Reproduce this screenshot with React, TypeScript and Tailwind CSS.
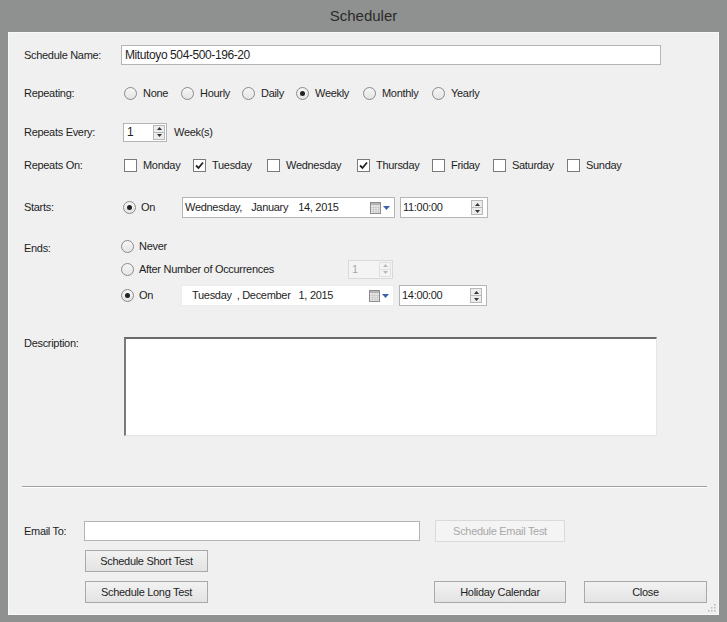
import type { ReactNode } from "react";

const DAYS = [
  { name: "Monday", checked: false, w: "w-[69px]" },
  { name: "Tuesday", checked: true, w: "w-[74px]" },
  { name: "Wednesday", checked: false, w: "w-[90px]" },
  { name: "Thursday", checked: true, w: "w-[75px]" },
  { name: "Friday", checked: false, w: "w-[61px]" },
  { name: "Saturday", checked: false, w: "w-[74px]" },
  { name: "Sunday", checked: false, w: "" },
];

const REPEATS = [
  { name: "None", checked: false, w: "w-[57px]" },
  { name: "Hourly", checked: false, w: "w-[61px]" },
  { name: "Daily", checked: false, w: "w-[54px]" },
  { name: "Weekly", checked: true, w: "w-[67px]" },
  { name: "Monthly", checked: false, w: "w-[69px]" },
  { name: "Yearly", checked: false, w: "" },
];

function Radio({ checked }: { checked?: boolean }) {
  return (
    <span className="w-[13px] h-[13px] shrink-0 rounded-full border border-[#8a8a8a] bg-linear-to-b from-[#f6f6f6] to-[#e4e4e4] flex items-center justify-center">
      {checked && <span className="w-[5px] h-[5px] rounded-full bg-[#222]" />}
    </span>
  );
}

function Check({ checked }: { checked?: boolean }) {
  return (
    <span className="w-[13px] h-[13px] shrink-0 border border-[#7a7a7a] bg-white flex items-center justify-center">
      {checked && (
        <svg width="9" height="9" viewBox="0 0 9 9">
          <path d="M1 4.5 L3.5 7 L8 1.5" fill="none" stroke="#222" strokeWidth="1.8" />
        </svg>
      )}
    </span>
  );
}

function SpinButtons({ disabled }: { disabled?: boolean }) {
  const c = disabled ? "#b8b8b8" : "#333";
  return (
    <span
      className={`w-[12px] h-[15px] flex flex-col border ${
        disabled ? "border-[#e0e0e0] bg-[#f4f4f4]" : "border-[#b9b9b9] bg-[#ececec]"
      }`}
    >
      <span className="flex-1 flex items-center justify-center">
        <svg width="5" height="3" viewBox="0 0 5 3">
          <path d="M0 3 L2.5 0 L5 3 Z" fill={c} />
        </svg>
      </span>
      <span className={`h-px ${disabled ? "bg-[#e0e0e0]" : "bg-[#b9b9b9]"}`} />
      <span className="flex-1 flex items-center justify-center">
        <svg width="5" height="3" viewBox="0 0 5 3">
          <path d="M0 0 L2.5 3 L5 0 Z" fill={c} />
        </svg>
      </span>
    </span>
  );
}

function CalendarIcon() {
  return (
    <span className="flex items-center gap-[2px]">
      <svg width="11" height="12" viewBox="0 0 11 12">
        <rect x="0.5" y="0.5" width="10" height="11" fill="#e8e8e8" stroke="#8c8c8c" />
        <rect x="1" y="1" width="9" height="2" fill="#b4b4b4" />
        <path d="M1 5.5 H10 M1 7.5 H10 M1 9.5 H10 M3.5 3 V11 M6 3 V11 M8.5 3 V11" stroke="#c9c9c9" strokeWidth="0.7" />
      </svg>
      <svg width="7" height="4" viewBox="0 0 7 4">
        <path d="M0 0 L7 0 L3.5 4 Z" fill="#3d63b0" />
      </svg>
    </span>
  );
}

function DateBox({ children, faint }: { children: ReactNode; faint?: boolean }) {
  return (
    <div
      className={`w-[213px] h-[21px] bg-white border ${
        faint ? "border-[#ececec]" : "border-[#b5b5b5]"
      } flex items-center pr-[4px]`}
    >
      <div className="flex-1 flex items-center">{children}</div>
      <CalendarIcon />
    </div>
  );
}

function TimeBox({ value }: { value: string }) {
  return (
    <div className="ml-[5px] w-[88px] h-[21px] bg-white border border-[#b5b5b5] flex items-center pl-[2px] pr-[4px]">
      <span className="flex-1">{value}</span>
      <SpinButtons />
    </div>
  );
}

function Button({ children, disabled, w }: { children: ReactNode; disabled?: boolean; w: string }) {
  return (
    <button
      className={`${w} h-[22px] flex items-center justify-center border ${
        disabled
          ? "border-[#dadada] bg-[#f4f4f4] text-[#a8a8a8]"
          : "border-[#a9a9a9] bg-linear-to-b from-[#f2f2f2] to-[#e3e3e3] text-[#1e1e1e]"
      }`}
    >
      {children}
    </button>
  );
}

function Label({ children }: { children: ReactNode }) {
  return <div className="w-[97px] shrink-0">{children}</div>;
}

export default function App() {
  return (
    <div className="w-[727px] h-[622px] bg-[#8f9090] flex flex-col font-['Liberation_Sans',Arial,sans-serif] text-[11px] tracking-[-0.3px] text-[#1e1e1e]">
      <div className="h-[32px] flex items-center justify-center text-[15px] tracking-normal text-[#2b2b2b]">
        Scheduler
      </div>
      <div className="ml-[8px] w-[711px] h-[583px] bg-[#f0f0f0] border border-[#f8f8f8] relative pl-[15px]">
        {/* name */}
        <div className="mt-[12px] h-[20px] flex items-center">
          <Label>Schedule Name:</Label>
          <div className="w-[540px] h-[20px] bg-white border border-[#b5b5b5] flex items-center px-[3px] text-[12px] tracking-[-0.4px]">
            Mitutoyo 504-500-196-20
          </div>
        </div>

        {/* repeating */}
        <div className="mt-[18px] h-[20px] flex items-center">
          <Label>Repeating:</Label>
          <div className="flex items-center ml-[3px]">
            {REPEATS.map((r) => (
              <div key={r.name} className={`${r.w} flex items-center gap-[6px]`}>
                <Radio checked={r.checked} />
                <span>{r.name}</span>
              </div>
            ))}
          </div>
        </div>

        {/* repeats every */}
        <div className="mt-[19px] h-[20px] flex items-center">
          <Label>Repeats Every:</Label>
          <div className="ml-[2px] w-[44px] h-[19px] bg-white border border-[#b5b5b5] flex items-center pl-[3px] pr-[1px]">
            <span className="flex-1 text-[12px]">1</span>
            <SpinButtons />
          </div>
          <span className="ml-[7px]">Week(s)</span>
        </div>

        {/* repeats on */}
        <div className="mt-[13px] h-[20px] flex items-center">
          <Label>Repeats On:</Label>
          <div className="flex items-center ml-[3px]">
            {DAYS.map((d) => (
              <div key={d.name} className={`${d.w} flex items-center gap-[6px]`}>
                <Check checked={d.checked} />
                <span>{d.name}</span>
              </div>
            ))}
          </div>
        </div>

        {/* starts */}
        <div className="mt-[22px] h-[21px] flex items-center">
          <Label>Starts:</Label>
          <div className="ml-[2px] w-[59px] flex items-center gap-[5px]">
            <Radio checked />
            <span>On</span>
          </div>
          <DateBox>
            <span className="pl-[2px]">Wednesday,</span>
            <span className="pl-[9px]">January</span>
            <span className="pl-[10px]">14, 2015</span>
          </DateBox>
          <TimeBox value="11:00:00" />
        </div>

        {/* ends */}
        <div className="mt-[18px] flex">
          <div className="w-[97px] shrink-0 pt-[4px]">Ends:</div>
          <div className="flex flex-col">
            <div className="h-[20px] flex items-center gap-[5px]">
              <Radio />
              <span>Never</span>
            </div>
            <div className="mt-[3px] h-[20px] flex items-center">
              <div className="w-[227px] flex items-center gap-[5px]">
                <Radio />
                <span>After Number of Occurrences</span>
              </div>
              <div className="w-[45px] h-[19px] border border-[#d9d9d9] bg-[#f4f4f4] flex items-center pl-[3px] pr-[1px] text-[#a8a8a8]">
                <span className="flex-1">1</span>
                <SpinButtons disabled />
              </div>
            </div>
            <div className="mt-[6px] h-[21px] flex items-center">
              <div className="w-[60px] flex items-center gap-[5px]">
                <Radio checked />
                <span>On</span>
              </div>
              <DateBox faint>
                <span className="pl-[10px]">Tuesday</span>
                <span className="pl-[5px]">, December</span>
                <span className="pl-[8px]">1, 2015</span>
              </DateBox>
              <TimeBox value="14:00:00" />
            </div>
          </div>
        </div>

        {/* description */}
        <div className="mt-[31px] flex items-start">
          <div className="w-[97px] shrink-0 -mt-[2px]">Description:</div>
          <div className="ml-[3px] w-[533px] h-[99px] bg-white border-t-2 border-l-2 border-t-[#6a6a6a] border-l-[#7a7a7a] border-r border-b border-r-[#e6e6e6] border-b-[#e6e6e6]" />
        </div>

        {/* separator */}
        <div className="mt-[50px] -ml-[2px] mr-[11px] border-t border-t-[#a0a0a0] border-b border-b-white" />

        {/* email */}
        <div className="mt-[32px] h-[22px] flex items-center">
          <div className="w-[60px] shrink-0">Email To:</div>
          <div className="w-[336px] h-[20px] bg-white border border-[#b5b5b5]" />
          <div className="ml-[15px]">
            <Button disabled w="w-[130px]">Schedule Email Test</Button>
          </div>
        </div>

        <div className="mt-[8px] ml-[61px]">
          <Button w="w-[123px]">Schedule Short Test</Button>
        </div>

        <div className="mt-[9px] flex items-center">
          <div className="ml-[61px]">
            <Button w="w-[123px]">Schedule Long Test</Button>
          </div>
          <div className="ml-[226px]">
            <Button w="w-[132px]">Holiday Calendar</Button>
          </div>
          <div className="ml-[18px]">
            <Button w="w-[123px]">Close</Button>
          </div>
        </div>

        {/* resize grip */}
        <svg className="absolute right-[2px] bottom-[2px]" width="8" height="8" viewBox="0 0 8 8">
          <g fill="#b8b8b8">
            <rect x="6" y="0" width="1.5" height="1.5" />
            <rect x="3" y="3" width="1.5" height="1.5" />
            <rect x="6" y="3" width="1.5" height="1.5" />
            <rect x="0" y="6" width="1.5" height="1.5" />
            <rect x="3" y="6" width="1.5" height="1.5" />
            <rect x="6" y="6" width="1.5" height="1.5" />
          </g>
        </svg>
      </div>
    </div>
  );
}
